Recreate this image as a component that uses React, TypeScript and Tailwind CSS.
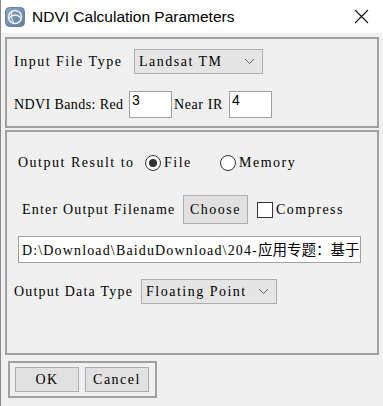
import React from "react";

// SimSun-ish look: serif face; tracking is set per use
const base = "font-['Liberation_Serif',serif] text-[14px] text-black whitespace-nowrap";
const txt = `${base} tracking-[1.5px]`;

function Chevron() {
  return (
    <svg width="11" height="7" viewBox="0 0 11 7" className="shrink-0">
      <path d="M1 1 L5.5 5.5 L10 1" fill="none" stroke="#606060" strokeWidth="1" />
    </svg>
  );
}

function Select({ value, width }: { value: string; width: string }) {
  return (
    <div className={`flex h-[25px] ${width} shrink-0 items-center justify-between border border-[#adadad] bg-[#e5e5e5] pl-[4px] pr-[7px]`}>
      <span className={txt}>{value}</span>
      <Chevron />
    </div>
  );
}

function Radio({ checked }: { checked?: boolean }) {
  return (
    <div className="flex h-[16px] w-[16px] shrink-0 items-center justify-center rounded-full border border-[#333] bg-white">
      {checked && <div className="h-[8px] w-[8px] rounded-full bg-[#333]" />}
    </div>
  );
}

function Button({ label, w, h }: { label: string; w: string; h: string }) {
  return (
    <div className={`flex ${w} ${h} shrink-0 items-center justify-center border border-[#adadad] bg-[#e1e1e1]`}>
      <span className={txt}>{label}</span>
    </div>
  );
}

export default function App() {
  return (
    <div className="relative h-[406px] w-[383px] overflow-hidden border-l border-[#8a8a8a] bg-[#f0f0f0]">
      {/* title bar */}
      <div className="flex h-[33px] items-center bg-white pl-[4px] pr-[14px]">
        <svg width="20" height="20" viewBox="0 0 20 20">
          <defs>
            <linearGradient id="ico" x1="0" y1="0" x2="1" y2="1">
              <stop offset="0%" stopColor="#8ea6bf" />
              <stop offset="100%" stopColor="#5f7c9a" />
            </linearGradient>
          </defs>
          <rect x="0.5" y="0.5" width="19" height="19" rx="4" fill="url(#ico)" stroke="#6d8298" />
          <circle cx="10" cy="10" r="6.5" fill="none" stroke="#e8eef4" strokeWidth="1.6" />
          <path d="M4 11 Q10 5 16 11" fill="none" stroke="#e8eef4" strokeWidth="1.3" />
          <path d="M7 4.5 Q5 10 9 16" fill="none" stroke="#e8eef4" strokeWidth="1.1" />
        </svg>
        <span className="ml-[7px] font-['Liberation_Sans',sans-serif] text-[15.5px] text-black">
          NDVI Calculation Parameters
        </span>
        <svg width="15" height="15" viewBox="0 0 15 15" className="ml-auto">
          <path d="M1 1 L14 14 M14 1 L1 14" stroke="#111" strokeWidth="1.1" />
        </svg>
      </div>

      {/* input panel */}
      <div className="ml-[4px] mt-[4px] flex h-[91px] w-[374px] flex-col border-2 border-[#a0a0a0] pl-[7px] pt-[10px]">
        <div className="flex items-center">
          <span className={`${txt} w-[120px]`}>Input File Type</span>
          <Select value="Landsat TM" width="w-[129px]" />
        </div>
        <div className="mt-[17px] flex items-center">
          <span className={`${base} w-[115px] tracking-[0.4px]`}>NDVI Bands: Red</span>
          <div className="h-[27px] w-[43px] shrink-0 border border-[#a0a0a0] bg-white pl-[2px] font-['Liberation_Sans',sans-serif] text-[14px] leading-[17px]">3</div>
          <span className={`${base} ml-[2px] w-[55px] tracking-[0.6px]`}>Near IR</span>
          <div className="h-[27px] w-[43px] shrink-0 border border-[#a0a0a0] bg-white pl-[2px] font-['Liberation_Sans',sans-serif] text-[14px] leading-[17px]">4</div>
        </div>
      </div>

      {/* output panel */}
      <div className="ml-[4px] mt-[2px] flex h-[225px] w-[374px] flex-col border-2 border-[#a0a0a0] pt-[20px]">
        <div className="flex items-center pl-[11px]">
          <span className={`${txt} w-[127px]`}>Output Result to</span>
          <Radio checked />
          <span className={`${txt} ml-[3px] w-[56px]`}>File</span>
          <Radio />
          <span className={`${txt} ml-[3px]`}>Memory</span>
        </div>
        <div className="mt-[22px] flex items-center pl-[15px]">
          <span className={`${base} w-[161px] tracking-[1.2px]`}>Enter Output Filename</span>
          <Button label="Choose" w="w-[65px]" h="h-[29px]" />
          <div className="ml-[9px] h-[16px] w-[16px] shrink-0 border border-[#333] bg-white" />
          <span className={`${txt} ml-[3px]`}>Compress</span>
        </div>
        <div className="ml-[11px] mt-[12px] flex h-[27px] w-[343px] items-center overflow-hidden border border-[#a0a0a0] bg-white pl-[3px]">
          <span className={`${base} tracking-[1.15px]`}>
            D:\Download\BaiduDownload\204-
            <span className="font-['Noto_Sans_CJK_SC',sans-serif] text-[14.5px] tracking-normal">应用专题：基于设</span>
          </span>
        </div>
        <div className="mt-[16px] flex items-center pl-[7px]">
          <span className={`${base} w-[127px] tracking-[1.2px]`}>Output Data Type</span>
          <Select value="Floating Point" width="w-[136px]" />
        </div>
      </div>

      {/* buttons */}
      <div className="ml-[7px] mt-[6px] flex h-[37px] w-[149px] items-center gap-[6px] border-2 border-[#a0a0a0] pl-[5px]">
        <Button label="OK" w="w-[64px]" h="h-[25px]" />
        <Button label="Cancel" w="w-[64px]" h="h-[25px]" />
      </div>
    </div>
  );
}
